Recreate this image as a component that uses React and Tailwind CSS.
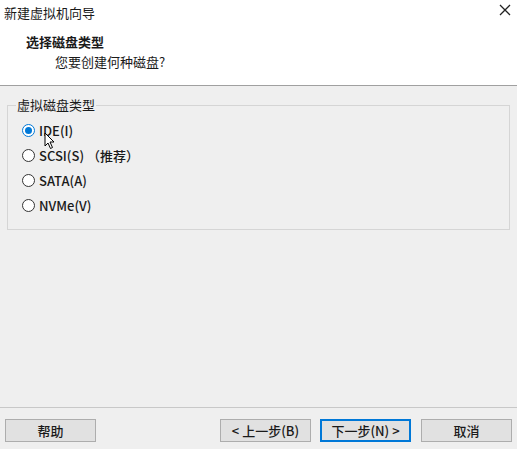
import React, { useState } from 'react';

const options = [
    { id: 'ide', label: 'IDE(I)' },
    { id: 'scsi', label: 'SCSI(S) （推荐）' },
    { id: 'sata', label: 'SATA(A)' },
    { id: 'nvme', label: 'NVMe(V)' },
];

function Radio({ checked }) {
    return (
        <span
            className={`w-[13px] h-[13px] rounded-full border bg-white flex items-center justify-center shrink-0 ${
                checked ? 'border-[#0078d7]' : 'border-[#333333]'
            }`}
        >
            {checked && <span className="w-[7px] h-[7px] rounded-full bg-[#0078d7]" />}
        </span>
    );
}

function Button({ children, primary }) {
    return (
        <button
            className={`h-[23px] w-[91px] bg-[#e1e1e1] text-[13px] font-medium text-[#1a1a1a] flex items-center justify-center ${
                primary ? 'border-2 border-[#0078d7]' : 'border border-[#adadad]'
            }`}
        >
            {children}
        </button>
    );
}

export default function App() {
    const [disk, setDisk] = useState('ide');

    return (
        <div
            className="w-[517px] h-[449px] flex flex-col bg-[#efefef] text-[#1a1a1a] overflow-hidden relative"
            style={{ fontFamily: '"Noto Sans CJK SC", "Noto Sans", sans-serif' }}
        >
            {/* header */}
            <div className="h-[86px] bg-white border-b border-[#a0a0a0] flex flex-col shrink-0">
                <div className="h-[24px] flex items-center justify-between pl-[4px] pr-[6px]">
                    <span className="text-[13px] leading-none">新建虚拟机向导</span>
                    <svg width="12" height="12" viewBox="0 0 12 12" className="mt-[-4px]">
                        <path d="M1 1 L11 11 M11 1 L1 11" stroke="#222" strokeWidth="1.3" />
                    </svg>
                </div>
                <div className="mt-[9px] pl-[26px] text-[13px] leading-[17px] font-bold">选择磁盘类型</div>
                <div className="mt-[3px] pl-[55px] text-[13px] leading-[17px]">您要创建何种磁盘?</div>
            </div>

            {/* body */}
            <div className="flex-1 px-[7px] pt-[10px]">
                <fieldset className="w-[503px] border border-[#d5d5d5] pl-[8px] pt-[4px] pb-[11px]">
                    <legend className="text-[13px] leading-[18px] px-[1px]">虚拟磁盘类型</legend>
                    <div className="flex flex-col">
                        {options.map((o) => (
                            <label
                                key={o.id}
                                onClick={() => setDisk(o.id)}
                                className="h-[25px] flex items-center gap-[4px] pl-[6px] text-[13px] font-medium cursor-default"
                            >
                                <Radio checked={disk === o.id} />
                                <span>{o.label}</span>
                            </label>
                        ))}
                    </div>
                </fieldset>
            </div>

            {/* footer */}
            <div className="border-t border-[#c8c8c8] h-[42px] shrink-0 flex items-start pt-[11px] px-[5px]">
                <Button>帮助</Button>
                <div className="flex-1" />
                <div className="flex gap-[9px]">
                    <Button>&lt; 上一步(B)</Button>
                    <Button primary>下一步(N) &gt;</Button>
                    <div className="ml-[1px]">
                        <Button>取消</Button>
                    </div>
                </div>
            </div>

            {/* mouse cursor */}
            <svg width="12" height="18" viewBox="0 0 12 18" className="absolute left-[44px] top-[132px]">
                <path d="M1 1 L1 14 L4 11 L6.5 16.5 L8.5 15.5 L6 10 L10 10 Z" fill="white" stroke="black" strokeWidth="1" />
            </svg>
        </div>
    );
}
